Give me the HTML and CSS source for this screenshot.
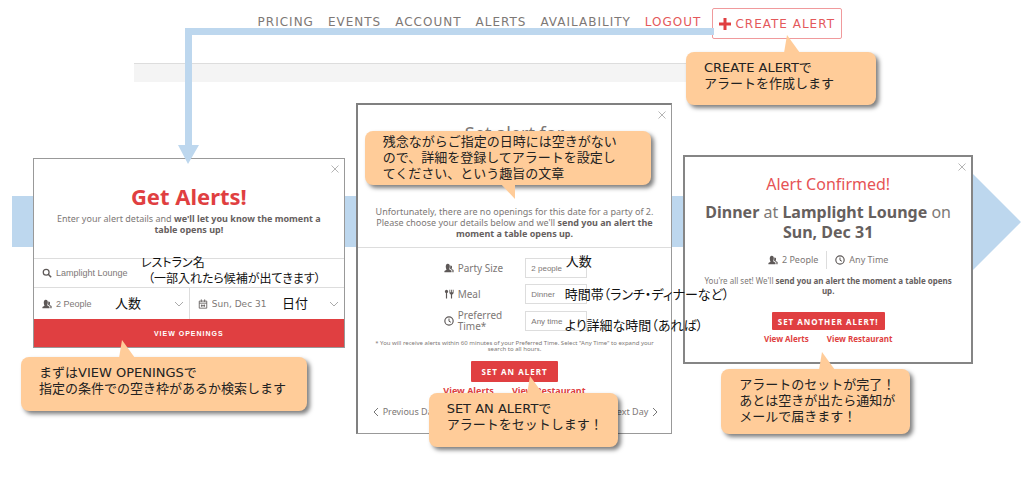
FILE: index.html
```html
<!DOCTYPE html>
<html lang="ja">
<head>
<meta charset="utf-8">
<title>アラート設定の流れ</title>
<link rel="stylesheet" href="styles.css">
</head>
<body>
<svg class="defs" aria-hidden="true">
  <symbol id="people" viewBox="0 0 12 12"><path d="M.5 11V9.500L3 8.200 2.300 6C1.700 3 2.600 1 4.500 1s2.900 1.700 2.400 4L6.200 7.500 9 9.300V11z"/><path d="M7.600 3c1.600-.2 2.300.9 2 2.500L9.200 7.200l2.300 1.300V11H10V8.600L7.300 7z"/></symbol>
  <symbol id="search" viewBox="0 0 12 12"><circle cx="5" cy="5" r="3.500" fill="none" stroke="currentColor" stroke-width="1.500"/><path d="M7.500 7.500l3.500 3.500" stroke="currentColor" stroke-width="1.800"/></symbol>
  <symbol id="calendar" viewBox="0 0 12 12"><path d="M1.500 2.500h9v8.500h-9zM1.500 5h9M4 .5v3M8 .5v3M4.500 6.500v3M7.500 6.500v3M3.500 8h5" fill="none" stroke="currentColor" stroke-width="1"/></symbol>
  <symbol id="meal" viewBox="0 0 12 12"><path d="M3 3v8.500M9 5v6.500" stroke="currentColor" stroke-width="1.400"/><ellipse cx="3" cy="3" rx="1.900" ry="2.200"/><path d="M6.500 1h1v3h1V1h1v3h1V1h1v4l-1.500 1.500H8L6.500 5z"/></symbol>
  <symbol id="clock" viewBox="0 0 12 12"><circle cx="6" cy="6" r="5" fill="none" stroke="currentColor" stroke-width="1.400"/><path d="M6 3V6.300l2.300 1.200" fill="none" stroke="currentColor" stroke-width="1.200"/></symbol>
  <symbol id="close" viewBox="0 0 10 10"><path d="M1.500 1.500l7 7M8.500 1.500l-7 7" stroke="currentColor" stroke-width="1"/></symbol>
</svg>

<header class="site-header">
  <nav class="nav">
    <a href="#">PRICING</a>
    <a href="#">EVENTS</a>
    <a href="#">ACCOUNT</a>
    <a href="#">ALERTS</a>
    <a href="#">AVAILABILITY</a>
    <a href="#" class="logout">LOGOUT</a>
  </nav>
  <button class="create" type="button"><svg viewBox="0 0 12 12" aria-hidden="true"><path d="M6 0v12M0 6h12" stroke="currentColor" stroke-width="3"/></svg>CREATE ALERT</button>
  <p class="callout callout-create"><svg class="tail tail-up" viewBox="0 0 16 18"><path d="M3 0L0 18h16z"/></svg>CREATE ALERTで<br>アラートを作成します</p>
</header>
<div class="band"></div>
<svg class="connector" viewBox="0 0 536 136" aria-hidden="true"><path d="M536 0H7V117H0L10 136 21 117H14V7H536z"/></svg>

<main class="stage">
  <svg class="ribbon" viewBox="0 0 1009 100" preserveAspectRatio="none" aria-hidden="true"><path d="M0 24H959V0L1009 50 959 100V75H0z"/></svg>

  <section class="card card-search">
    <button class="close" type="button" aria-label="Close"><svg><use href="#close"/></svg></button>
    <div class="search-intro">
      <h1>Get Alerts!</h1>
      <p>Enter your alert details and <b>we'll let you know the moment a table opens up!</b></p>
    </div>
    <label class="search-row"><svg class="icon"><use href="#search"/></svg><input type="text" value="Lamplight Lounge" aria-label="Restaurant"></label>
    <div class="search-pair">
      <label class="pick"><svg class="icon"><use href="#people"/></svg><select aria-label="People"><option>2 People</option></select><svg class="chev" viewBox="0 0 8 8"><path d="M0 2l4 4 4-4"/></svg></label>
      <label class="pick pick-date"><svg class="icon"><use href="#calendar"/></svg><select aria-label="Date"><option>Sun, Dec 31</option></select><svg class="chev" viewBox="0 0 8 8"><path d="M0 2l4 4 4-4"/></svg></label>
    </div>
    <button class="openings" type="button">VIEW OPENINGS</button>
    <span class="note note-small note-name">レストラン名</span>
    <span class="note note-small note-hint">（一部入れたら候補が出てきます）</span>
    <span class="note note-count">人数</span>
    <span class="note note-date">日付</span>
    <p class="callout callout-search"><svg class="tail tail-up" viewBox="0 0 16 18"><path d="M3 0L0 18h16z"/></svg>まずはVIEW OPENINGSで<br>指定の条件での空き枠があるか検索します</p>
  </section>

  <section class="card card-alert">
    <button class="close" type="button" aria-label="Close"><svg><use href="#close"/></svg></button>
    <div class="alert-intro">
      <h2>Set alert for</h2>
      <p>Unfortunately, there are no openings for this date for a party of 2. Please choose your details below and we'll <b>send you an alert the moment a table opens up.</b></p>
    </div>
    <div class="fields">
      <label class="field"><svg class="icon"><use href="#people"/></svg><span>Party Size</span><select><option>2 people</option></select></label>
      <label class="field"><svg class="icon"><use href="#meal"/></svg><span>Meal</span><select><option>Dinner</option></select></label>
      <label class="field"><svg class="icon"><use href="#clock"/></svg><span>Preferred Time*</span><select><option>Any time</option></select></label>
    </div>
    <p class="fine">* You will receive alerts within 60 minutes of your Preferred Time. Select "Any Time" to expand your search to all hours.</p>
    <button class="action" type="button">SET AN ALERT</button>
    <div class="links"><a href="#">View Alerts</a><a href="#">View Restaurant</a></div>
    <div class="days">
      <a href="#"><svg viewBox="0 0 6 10"><path d="M5 1L1 5l4 4"/></svg>Previous Day</a>
      <a href="#">Next Day<svg viewBox="0 0 6 10"><path d="M1 1l4 4-4 4"/></svg></a>
    </div>
    <span class="note note-party">人数</span>
    <span class="note note-meal">時間帯（ランチ・ディナーなど）</span>
    <span class="note note-time">より詳細な時間（あれば）</span>
    <p class="callout callout-sorry"><svg class="tail tail-down" viewBox="0 0 16 18"><path d="M0 0h16v17z"/></svg>残念ながらご指定の日時には空きがない<br>ので、詳細を登録してアラートを設定し<br>てください、という趣旨の文章</p>
    <p class="callout callout-set"><svg class="tail tail-up" viewBox="0 0 16 18"><path d="M3 0L0 18h16z"/></svg>SET AN ALERTで<br>アラートをセットします！</p>
  </section>

  <section class="card card-done">
    <button class="close" type="button" aria-label="Close"><svg><use href="#close"/></svg></button>
    <h2>Alert Confirmed!</h2>
    <p class="booking"><b>Dinner</b> at <b>Lamplight Lounge</b> on <b>Sun, Dec 31</b></p>
    <div class="facts"><span><svg class="icon"><use href="#people"/></svg>2 People</span><span><svg class="icon"><use href="#clock"/></svg>Any Time</span></div>
    <p class="set">You're all set! We'll <b>send you an alert the moment a table opens up.</b></p>
    <button class="action" type="button">SET ANOTHER ALERT!</button>
    <div class="links"><a href="#">View Alerts</a><a href="#">View Restaurant</a></div>
    <p class="callout callout-done"><svg class="tail tail-up" viewBox="0 0 16 18"><path d="M3 0L0 18h16z"/></svg>アラートのセットが完了！<br>あとは空きが出たら通知が<br>メールで届きます！</p>
  </section>
</main>
</body>
</html>
```

FILE: styles.css
```css
* { box-sizing: border-box; }
body {
  margin: 0;
  position: relative;
  background: #fff;
  color: #7d7876;
  font-family: "Noto Sans", "Noto Sans CJK JP", sans-serif;
  font-size: 9px;
}
h1, h2, p { margin: 0; }
a { color: inherit; text-decoration: none; }
button, input, select { font: inherit; color: inherit; border: 0; background: none; padding: 0; margin: 0; }
select { appearance: none; }
svg { display: block; }
b { color: #66605e; }
.defs { position: absolute; width: 0; height: 0; }

.site-header {
  position: relative;
  display: flex;
  justify-content: flex-end;
  align-items: flex-start;
  gap: 11px;
  height: 63px;
  padding: 8px 182px 0 0;
  font: 12px/30px "DejaVu Sans", sans-serif;
  letter-spacing: 1px;
}
.nav { display: flex; gap: 14px; line-height: 29px; }
.logout, .create { color: #e4595b; }
.create {
  display: flex;
  align-items: center;
  gap: 4px;
  height: 31px;
  padding: 0 6px;
  border: 1px solid #f09a9c;
  border-radius: 2px;
  letter-spacing: 1px;
}
.create svg { width: 12px; height: 12px; color: #e03f41; }
.band { height: 19px; margin: 0 334px 0 134px; background: #f4f4f4; border-top: 1px solid #ddd; }
.connector { position: absolute; left: 178px; top: 28px; width: 536px; height: 136px; fill: #bdd7ee; z-index: 2; }

.stage {
  position: relative;
  display: grid;
  grid-template-columns: 312fr 317fr 290fr;
  gap: 11px;
  align-items: start;
  padding: 21px 51px 46px 33px;
}
.ribbon { position: absolute; left: 12px; top: 90px; width: calc(100% - 15px); height: 100px; fill: #bdd7ee; }
.card { position: relative; background: #fff; border: 1px solid #999; text-align: center; }
.close { position: absolute; right: 4px; top: 5px; color: #b5b5b5; }
.close svg { width: 10px; height: 10px; }
.icon { width: 10px; height: 10px; flex: none; fill: currentColor; color: #5d5857; }

.card-search { margin-top: 55px; }
.search-intro { height: 99px; padding: 21px 20px 0; line-height: 11px; }
.search-intro h1 { margin-bottom: 1px; font: bold 22px/32px "Noto Sans", sans-serif; color: #e03f41; }
.search-row { display: flex; align-items: center; gap: 4px; height: 29px; padding: 0 8px; border-top: 1px solid #ddd; font: 9px "Liberation Sans", sans-serif; }
.search-row input { flex: 1; min-width: 0; }
.search-pair { display: grid; grid-template-columns: 1fr 1fr; border-top: 1px solid #ddd; }
.pick { display: flex; align-items: center; gap: 4px; height: 31px; padding: 0 6px 0 8px; font: 9px "Liberation Sans", sans-serif; }
.pick select { flex: 1; min-width: 0; }
.pick-date { border-left: 1px solid #ddd; font-family: "DejaVu Sans", sans-serif; }
.chev { width: 8px; height: 8px; fill: none; stroke: #aaa; }
.openings { display: block; width: 100%; height: 28px; background: #e03f41; color: #fff; font: bold 7px "Liberation Sans", sans-serif; letter-spacing: 1px; }

.card-alert { border-left: 2px solid #808080; border-top: 2px solid #808080; }
.alert-intro { height: 143px; padding: 15px 16px 0; border-bottom: 1px solid #ddd; line-height: 11px; }
.alert-intro h2 { height: 86px; font: 18px/26px "Noto Sans", sans-serif; }
.fields { display: grid; gap: 6px; padding: 10px 84px 0 86px; }
.field { display: grid; grid-template-columns: 10px 1fr 62px; gap: 4px; align-items: center; font-size: 10px; line-height: 11px; text-align: left; }
.field span { padding-right: 12px; }
.field select { height: 20px; padding-left: 5px; border: 1px solid #ddd; font: 8px "Liberation Sans", sans-serif; }
.fine { padding: 8px 8px 0; font: 6px/6px "Noto Sans", sans-serif; }
.action { height: 21px; background: #e03f41; color: #fff; font: bold 8px "Noto Sans", sans-serif; letter-spacing: 1px; border-radius: 1px; padding: 0 10px; }
.card-alert .action { margin-top: 9px; }
.links { display: flex; justify-content: center; gap: 18px; color: #e03f41; font-weight: bold; line-height: 18px; }
.days { display: flex; justify-content: space-between; padding: 4px 13px 13px 15px; line-height: 16px; }
.days a { display: flex; align-items: center; gap: 4px; }
.days svg { width: 6px; height: 10px; fill: none; stroke: #777; }

.card-done { margin-top: 52px; border: 2px solid #858585; padding: 14px 12px 14px; line-height: 10px; }
.card-done h2 { font: 16px/26px "Noto Sans", sans-serif; color: #e65355; }
.booking { margin-top: 5px; font-size: 16px; line-height: 20px; }
.facts { display: flex; justify-content: center; margin-top: 9px; line-height: 18px; }
.facts span { display: flex; align-items: center; gap: 4px; padding: 0 8px; }
.facts span + span { border-left: 1px solid #ddd; }
.set { margin: 7px 0 16px; padding: 0 4px; font-size: 8px; }
.card-done .action { height: 18px; padding: 0 6px; }
.card-done .links { font-size: 8px; }

.note { position: absolute; z-index: 3; color: #111; font: 13px/16px "Noto Sans CJK JP", sans-serif; font-feature-settings: "palt"; white-space: nowrap; }
.note-small { font-size: 12px; }
.note-name { left: 107px; top: 95px; }
.note-hint { left: 114px; top: 111px; }
.note-count { left: 81px; top: 136px; }
.note-date { left: 248px; top: 136px; }
.note-party { left: 208px; top: 148px; }
.note-meal { left: 207px; top: 181px; }
.note-time { left: 207px; top: 212px; }

.callout {
  position: absolute;
  z-index: 4;
  padding: 8px 18px 13px;
  border-radius: 8px;
  background: #ffcc99;
  color: #222;
  box-shadow: 3px 3px 4px rgba(0, 0, 0, .5);
  font: 13px/16px "DejaVu Sans", "Noto Sans CJK JP", sans-serif;
  letter-spacing: 0;
  text-align: left;
  white-space: nowrap;
}
.tail { position: absolute; width: 16px; height: 18px; fill: #ffcc99; }
.tail-up { top: -17px; }
.tail-down { bottom: -15px; }
.callout-create { right: 148px; top: 52px; width: 190px; height: 53px; }
.callout-create .tail { left: 98px; }
.callout-search { left: -13px; top: 198px; width: 286px; height: 54px; }
.callout-search .tail { left: 98px; }
.callout-sorry { left: 7px; top: 26px; width: 286px; height: 54px; padding-top: 3px; }
.callout-sorry .tail { left: 134px; }
.callout-set { left: 71px; top: 288px; width: 189px; height: 54px; }
.callout-set .tail { left: 98px; }
.callout-done { left: 36px; top: 212px; width: 189px; height: 65px; }
.callout-done .tail { left: 98px; }
```
